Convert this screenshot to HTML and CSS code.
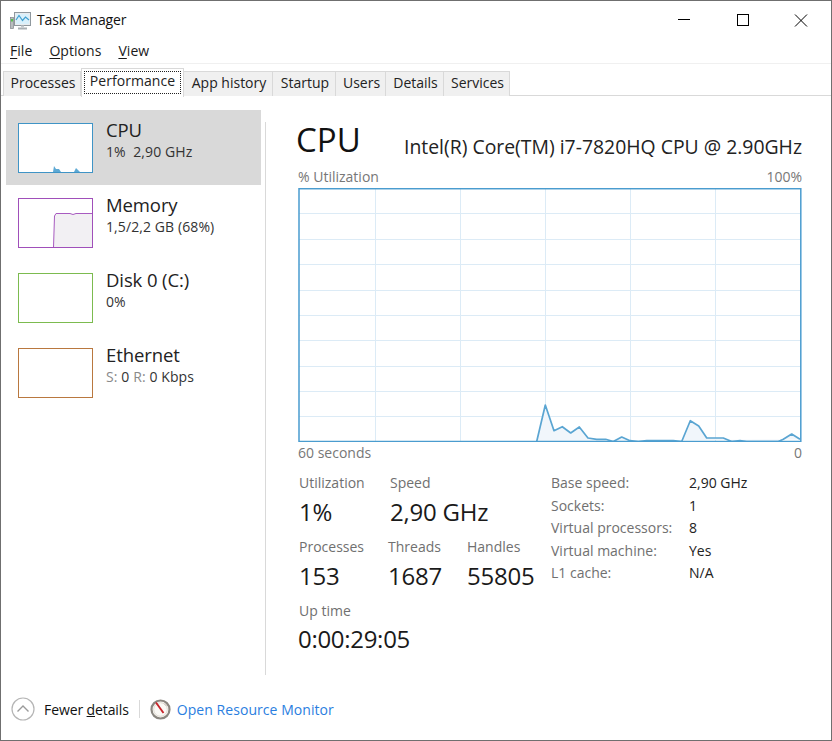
FILE: index.html
```html
<!DOCTYPE html>
<html lang="en">
<head>
<meta charset="utf-8">
<title>Task Manager</title>
<link rel="stylesheet" href="styles.css">
</head>
<body>
<div class="window">
  <header class="titlebar">
    <svg class="app-icon" width="21" height="18" viewBox="0 0 21 18">
      <rect x="4.5" y=".5" width="16" height="13" fill="#e8ecef" stroke="#8f989e"/>
      <rect x="6" y="2" width="13" height="10" fill="#d9f0fb"/>
      <path d="M6 8L9 3.5L12.5 8.5L15.5 5L19 8" fill="none" stroke="#3f9fd0" stroke-width="1.2"/>
      <path d="M8 16.5H17" stroke="#a9afb3" stroke-width="2"/>
      <rect x="11" y="13.5" width="3" height="2" fill="#c3c8cb"/>
      <rect x=".5" y="5.5" width="3" height="11" fill="#b9bdbf" stroke="#7f8589" stroke-width=".7"/>
      <rect x="1" y="7" width="2" height="2.5" fill="#57c14e"/>
    </svg>
    <span class="title">Task Manager</span>
    <div class="controls">
      <svg class="ctl" width="46" height="31" viewBox="0 0 46 31"><path d="M17 18.5H29" stroke="#000" fill="none"/></svg>
      <svg class="ctl ctl-max" width="58" height="31" viewBox="0 0 58 31"><rect x="22.5" y="13.5" width="11" height="11" stroke="#000" fill="none"/></svg>
      <svg class="ctl ctl-close" width="58" height="31" viewBox="0 0 58 31"><path d="M22 13.5L34 25.5M34 13.5L22 25.5" stroke="#000" fill="none"/></svg>
    </div>
  </header>

  <nav class="menubar">
    <span class="menu-item"><u>F</u>ile</span>
    <span class="menu-item"><u>O</u>ptions</span>
    <span class="menu-item"><u>V</u>iew</span>
  </nav>

  <div class="tabs">
    <span class="tab">Processes</span>
    <span class="tab tab-active"><span class="focus">Performance</span></span>
    <span class="tab">App history</span>
    <span class="tab">Startup</span>
    <span class="tab">Users</span>
    <span class="tab">Details</span>
    <span class="tab">Services</span>
  </div>

  <main class="main">
    <aside class="sidebar">
      <div class="res res-selected">
        <svg class="thumb" width="75" height="50" viewBox="0 0 75 50">
          <rect width="75" height="50" fill="#fff"/>
          <path d="M0 49L35 49L36 43L38 46L41 46L43 49L56 49L58 45L60 47L62 49L75 49Z" fill="#5ea9d4"/>
          <rect x=".5" y=".5" width="74" height="49" fill="none" stroke="#3f94c6"/>
        </svg>
        <div class="res-text"><div class="res-name">CPU</div><div class="res-sub">1%&nbsp; 2,90 GHz</div></div>
      </div>
      <div class="res">
        <svg class="thumb" width="75" height="50" viewBox="0 0 75 50">
          <path d="M35.5 49.5L36.5 18L38 15.5L52 15.5L55 16.5L58 15.5L74.5 15.5L74.5 49.5Z" fill="#f2f0f3" stroke="#a85bc0"/>
          <rect x=".5" y=".5" width="74" height="49" fill="none" stroke="#a04fba"/>
        </svg>
        <div class="res-text"><div class="res-name">Memory</div><div class="res-sub">1,5/2,2 GB (68%)</div></div>
      </div>
      <div class="res">
        <svg class="thumb" width="75" height="50" viewBox="0 0 75 50"><rect x=".5" y=".5" width="74" height="49" fill="none" stroke="#7cbb4f"/></svg>
        <div class="res-text"><div class="res-name">Disk 0 (C:)</div><div class="res-sub">0%</div></div>
      </div>
      <div class="res">
        <svg class="thumb" width="75" height="50" viewBox="0 0 75 50"><rect x=".5" y=".5" width="74" height="49" fill="none" stroke="#b9783f"/></svg>
        <div class="res-text"><div class="res-name">Ethernet</div><div class="res-sub"><span class="dim">S:</span> 0 <span class="dim">R:</span> 0 Kbps</div></div>
      </div>
    </aside>
    <div class="divider"></div>

    <section class="detail">
      <div class="head">
        <h1 class="head-title">CPU</h1>
        <span class="head-model">Intel(R) Core(TM) i7-7820HQ CPU @ 2.90GHz</span>
      </div>
      <div class="axis axis-top"><span>% Utilization</span><span>100%</span></div>
      <svg class="chart" width="504" height="254" viewBox="298 188 504 254">
        <g stroke="#dcebf6" fill="none">
          <path d="M299 213.5H801M299 239.5H801M299 264.5H801M299 290.5H801M299 315.5H801M299 340.5H801M299 366.5H801M299 391.5H801M299 416.5H801"/>
          <path d="M375.5 189V441M460.5 189V441M545.5 189V441M630.5 189V441M715.5 189V441"/>
        </g>
        <path d="M536.7 441.5L545.3 405L554 430.7L562.3 426.7L570.7 433L579.3 427L588 438L596.7 439.3L605.7 439.3L613.3 441.5L621.7 437L630 440.7L638.3 441.5L646.7 440.7L673.3 440.7L681.7 441.5L690.3 420.7L698.7 426L706.7 438L723.3 438L731.7 441.5L740 440.7L746.7 441.5L778.3 441.5L783.3 439.3L791.7 434L800 439.3" fill="#f1f6fb" stroke="#5aa5d2" stroke-width="1.7" stroke-linejoin="round"/>
        <rect x="299" y="188.7" width="501.8" height="252.8" fill="none" stroke="#4a9ccf" stroke-width="1.5"/>
      </svg>
      <div class="axis axis-bottom"><span>60 seconds</span><span>0</span></div>

      <div class="stats">
        <div class="stats-left">
          <div class="stat-row stat-row-a">
            <div class="stat"><div class="stat-label">Utilization</div><div class="stat-value">1%</div></div>
            <div class="stat"><div class="stat-label">Speed</div><div class="stat-value">2,90 GHz</div></div>
          </div>
          <div class="stat-row stat-row-b">
            <div class="stat"><div class="stat-label">Processes</div><div class="stat-value">153</div></div>
            <div class="stat"><div class="stat-label">Threads</div><div class="stat-value">1687</div></div>
            <div class="stat"><div class="stat-label">Handles</div><div class="stat-value">55805</div></div>
          </div>
          <div class="stat-row stat-row-c">
            <div class="stat"><div class="stat-label">Up time</div><div class="stat-value">0:00:29:05</div></div>
          </div>
        </div>
        <dl class="specs">
          <dt>Base speed:</dt><dd>2,90 GHz</dd>
          <dt>Sockets:</dt><dd>1</dd>
          <dt>Virtual processors:</dt><dd>8</dd>
          <dt>Virtual machine:</dt><dd>Yes</dd>
          <dt>L1 cache:</dt><dd>N/A</dd>
        </dl>
      </div>
    </section>
  </main>

  <footer class="footer">
    <svg class="chev" width="24" height="24" viewBox="0 0 24 24">
      <circle cx="12" cy="12" r="11" fill="#fff" stroke="#b5b5b5" stroke-width="1.2"/>
      <path d="M6.5 14.5L12 9L17.5 14.5" fill="none" stroke="#9a9a9a" stroke-width="1.4"/>
    </svg>
    <span class="fewer">Fewer <u>d</u>etails</span>
    <span class="foot-sep"></span>
    <svg class="gauge" width="21" height="21" viewBox="0 0 21 21">
      <circle cx="10.5" cy="10.5" r="9" fill="#fbf9f5" stroke="#8b8780" stroke-width="2.2"/>
      <circle cx="10.5" cy="10.5" r="6.8" fill="none" stroke="#d9d4ca" stroke-width=".8"/>
      <path d="M6 3.5L13.5 14" stroke="#c8242a" stroke-width="1.9" fill="none"/>
      <path d="M14 4.5L16.5 7" stroke="#c4bfb6" fill="none"/>
    </svg>
    <a class="link">Open Resource Monitor</a>
  </footer>
</div>
</body>
</html>
```

FILE: styles.css
```css
* { box-sizing: border-box; }
html, body { margin: 0; padding: 0; }
body { width: 832px; height: 741px; background: #fff; overflow: hidden; font-family: "Open Sans", "Noto Sans", sans-serif; color: #1a1a1a; }

.window { width: 832px; height: 741px; border: 1px solid #6f6f6f; display: flex; flex-direction: column; background: #fff; }

.titlebar { height: 38px; display: flex; align-items: flex-start; flex: none; }
.app-icon { margin: 11px 0 0 9px; flex: none; }
.title { margin: 9px 0 0 6px; font-size: 14px; line-height: 20px; letter-spacing: -.15px; color: #111; }
.controls { margin-left: auto; display: flex; }
.ctl { display: block; }
.ctl-max { margin-left: 8px; }
.ctl-close { margin-left: 0; }

.menubar { height: 24px; display: flex; gap: 17px; padding: 2px 0 0 9px; font-size: 14px; line-height: 20px; letter-spacing: .05px; flex: none; }
.menu-item u { text-underline-offset: 2px; }

.tabs { height: 33px; flex: none; display: grid; grid-template-columns: 78px 103px 89px 63px 50px 58px 66px; justify-content: start; padding: 7px 0 0 2px; border-top: 1px solid #f0f0f0; border-bottom: 1px solid #d9d9d9; font-size: 14px; line-height: 22px; }
.tab { height: 25px; padding-left: 2px; text-align: center; background: #f0f0f0; border: 1px solid #d9d9d9; border-left: 0; border-bottom: 0; color: #222; }
.tab:first-child { border-left: 1px solid #d9d9d9; }
.tab-active { height: 29px; margin-top: -3px; background: #fff; border: 1px solid #d9d9d9; border-bottom: 0; padding: 2px; position: relative; z-index: 1; letter-spacing: .05px; }
.focus { display: block; height: 23px; line-height: 18px; border: 1px dotted #222; }

.main { flex: 1; display: flex; min-height: 0; }
.sidebar { width: 260px; flex: none; padding: 14px 0 0 5px; }
.res { height: 75px; display: flex; align-items: flex-start; padding: 13px 0 0 12px; }
.res-selected { background: #d9d9d9; }
.thumb { display: block; flex: none; }
.res-text { margin-left: 13px; margin-top: -6px; }
.res-name { font-size: 18.5px; line-height: 26px; letter-spacing: -.1px; color: #222; }
.res-sub { font-size: 14px; line-height: 17px; letter-spacing: .1px; color: #333; }
.dim { color: #8a8a8a; }

.divider { width: 1px; flex: none; margin: 26px 0 0 4px; background: #d9d9d9; }

.detail { flex: 1; min-width: 0; padding: 0 29px 0 32px; }
.head { height: 69px; display: flex; justify-content: space-between; align-items: flex-end; padding-bottom: 3px; }
.head-title { margin: 0 0 0 -2px; font-size: 33px; font-weight: 400; line-height: 44px; color: #111; }
.head-model { font-size: 19.4px; line-height: 24px; margin-bottom: 3px; color: #222; }
.axis { display: flex; justify-content: space-between; font-size: 14px; line-height: 18px; color: #777; }
.axis-top { height: 23px; padding-top: 3px; }
.axis-bottom { height: 23px; padding-top: 2px; }
.chart { display: block; }

.stats { display: flex; margin: 8px 0 0 1px; }
.stats-left { width: 252px; flex: none; }
.stat-row { display: flex; height: 64px; }
.stat-row-a .stat:first-child { width: 91px; }
.stat-row-b .stat:nth-child(1) { width: 89px; }
.stat-row-b .stat:nth-child(2) { width: 79px; }
.stat-label { font-size: 14px; line-height: 20px; color: #707070; }
.stat-value { margin-top: 2px; font-size: 24px; line-height: 34px; letter-spacing: -.2px; color: #1a1a1a; }
.stat-row-c .stat-value { margin: 1px 0 0 -1px; letter-spacing: -.3px; }

.specs { margin: 0; display: grid; grid-template-columns: 138px auto; grid-auto-rows: 22.5px; font-size: 14px; line-height: 20px; }
.specs dt { color: #707070; }
.specs dd { margin: 0; color: #222; }

.footer { height: 65px; flex: none; display: flex; align-items: center; padding: 3px 0 0 10px; }
.chev { flex: none; }
.fewer { margin-left: 9px; font-size: 14px; letter-spacing: -.1px; color: #111; }
.foot-sep { width: 1px; height: 18px; margin-left: 10px; background: #d9d9d9; }
.gauge { margin-left: 10px; flex: none; }
.link { margin-left: 6px; font-size: 14px; letter-spacing: .05px; color: #2a7ee0; }
```
